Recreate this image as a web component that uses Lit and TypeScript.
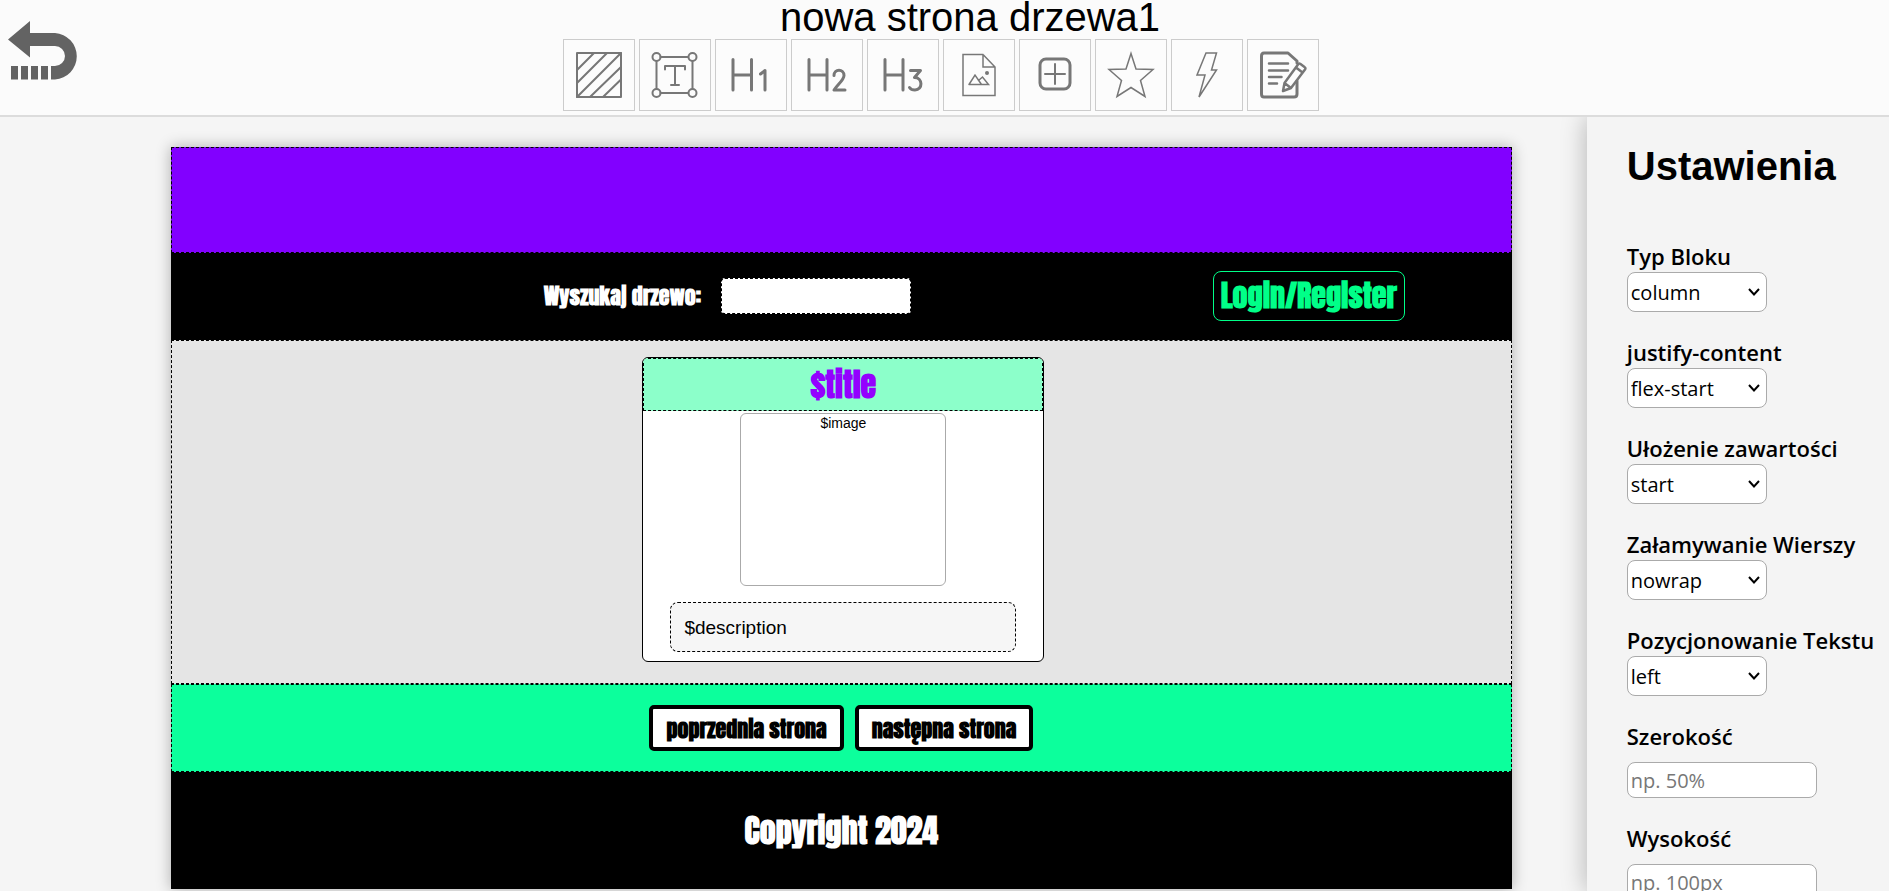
import { LitElement, html, css, svg } from "lit";
import { customElement, property } from "lit/decorators.js";

const icons: Record<string, unknown> = {
  block: svg`<rect x="14" y="14" width="44" height="44"/>
    <path d="M14 31 31 14M14 44 44 14M14 58 58 14M27 58 58 28M40 58 58 40.500"/>`,
  text: svg`<path d="M21.500 18H49M53.500 22V49.500M49 54H21.500M17.500 49.500V22"/>
    <circle cx="17.500" cy="18" r="4"/><circle cx="53.500" cy="18" r="4"/><circle cx="17.500" cy="54" r="4"/><circle cx="53.500" cy="54" r="4"/>
    <path d="M26 30.500V27H46V30.500M36 27V45.500M32 46H40"/>`,
  h1: svg`<path class="heavy" d="M18 20.500V51M36.500 20.500V51M18 36H36.500M45.500 35 50 31.500V51"/>`,
  h2: svg`<path class="heavy" d="M18 20.500V51M36 20.500V51M18 36H36M43 36.500C43 29.500 53 29.500 53 36.500C53 41 47 45 43 51H54"/>`,
  h3: svg`<path class="heavy" d="M18 20.500V51M36 20.500V51M18 36H36M43.500 31.500H53.500L47.500 38.500C56 38.500 56 51 48 51C45.500 51 43.500 50 42.500 48.500"/>`,
  image: svg`<path class="thin" d="M20 15.500H40L52 28V56.500H20ZM40 15.500V28H52M26 45.500 32 36 38.500 45.500M35.500 41.500 39.500 38 45.500 45.500H26"/>
    <circle class="dot" cx="44" cy="34" r="2"/>`,
  plus: svg`<rect class="heavy" x="21" y="20" width="30" height="30" rx="6"/><path d="M36 25V45M26 35H46"/>`,
  star: svg`<path class="thin" d="M36 14.500 41 30 58 30.500 45.500 41.500 50 57.500 36 48.500 22 57.500 26.500 41.500 14 30.500 31 30Z"/>`,
  bolt: svg`<path class="thin" d="M35 14H45.500L40.500 31H45.500L28 58 34 36H26Z"/>`,
  note: svg`<path class="heavy" d="M50 24V22L41 14H17Q14.500 14 14.500 17V55Q14.500 58 17 58H47Q50 58 50 55V42"/>
    <path class="medium" d="M22 24.500H41M22 31.500H41M22 38H34.500M22 44.500H30"/>
    <path class="medium" d="M37.500 44 51 25.500Q52 24 53.500 25L57.500 28Q59 29 58 30.500L44 49 36 52ZM37.500 44 44 49M49 28.500 55.500 33.500"/>`,
};

@customElement("settings-field")
class SettingsField extends LitElement {
  @property() label = "";
  @property() value = "";
  @property() hint = "";

  static styles = css`
    :host { display: block; }
    .name { display: block; font-size: 22px; font-weight: 600; line-height: 32px; white-space: nowrap; }
    .pick { display: grid; width: 140px; align-items: center; }
    .pick > * { grid-area: 1 / 1; }
    .chevron { justify-self: end; margin-right: 7px; pointer-events: none; }
    select, input {
      box-sizing: border-box; margin: 0; padding: 0 3px; font: inherit; font-size: 20px; color: #000;
      background: #fff; border: 1px solid #aaa; border-radius: 8px;
    }
    select { appearance: none; width: 100%; height: 40px; }
    input { display: block; width: 190px; height: 36px; margin-top: 10px; }
    input::placeholder { color: #777; }
  `;

  render() {
    return html`<label class="name" for="control">${this.label}</label>
      ${this.hint
        ? html`<input id="control" type="text" placeholder=${this.hint} />`
        : html`<div class="pick">
            <select id="control"><option>${this.value}</option></select>
            <svg class="chevron" width="12" height="8" viewBox="0 0 12 8" fill="none" stroke="#000" stroke-width="2"><path d="M1 1 6 6.500 11 1"/></svg>
          </div>`}`;
  }
}

@customElement("app-root")
class AppRoot extends LitElement {
  static styles = css`
    :host {
      display: flex; flex-direction: column; height: 100vh; overflow: hidden;
      font-family: "Liberation Sans", Arial, sans-serif; color: #000; background: #f5f5f5;
    }
    button { font: inherit; cursor: pointer; }
    .header {
      display: grid; grid-template-columns: 80px 1fr 87px; align-items: start; flex: none;
      box-sizing: border-box; padding-bottom: 4px; background: #fbfbfb; border-bottom: 2px solid #dcdcdc;
    }
    .back { margin: 20px 0 0 8px; padding: 0; border: 0; background: none; line-height: 0; justify-self: start; }
    .middle { display: flex; flex-direction: column; align-items: center; }
    .page-name { margin: 0; padding-left: 58px; font-size: 40px; font-weight: 400; line-height: 34px; }
    .tools { display: flex; gap: 4px; margin-top: 5px; }
    .tool { box-sizing: border-box; width: 72px; height: 72px; padding: 0; border: 1px solid #ccc; background: #fcfcfc; }
    .tool svg { display: block; margin: -1px; fill: none; stroke: #777; stroke-width: 2; stroke-linecap: round; stroke-linejoin: round; }
    .tool .heavy { stroke-width: 3; }
    .tool .medium { stroke-width: 2.500; }
    .tool .thin { stroke-width: 1.500; stroke-linejoin: miter; }
    .tool .dot { fill: #777; stroke: none; }

    .body { display: flex; flex: 1; min-height: 0; }
    .stage { flex: 1; min-width: 0; overflow: hidden; padding: 30px 75px 0 171px; }
    .canvas {
      box-shadow: 0 0 14px rgba(0, 0, 0, 0.3); font-weight: 700;
      font-family: Impact, Anton, "Open Sans Condensed", "Roboto Condensed", "Liberation Sans Narrow", "Liberation Sans", sans-serif;
    }
    .row { box-sizing: border-box; border: 1px dashed #000; }
    .banner { height: 106px; background: #8200ff; }
    .search { display: grid; grid-template-columns: 1fr 192px 106px; align-items: center; height: 87px; padding-bottom: 2px; background: #000; color: #fff; border-color: #000; }
    .find { display: flex; align-items: center; justify-content: center; gap: 20px; padding-left: 70px; }
    .find-label { font-size: 22px; }
    .find-box { box-sizing: border-box; width: 190px; height: 36px; border: 1px dashed #000; border-radius: 4px; background: #fff; font-size: 20px; }
    .login { box-sizing: border-box; height: 50px; padding: 0; border: 1px solid #00ff88; border-radius: 8px; background: #000; color: #00ff88; font-size: 30px; }
    .content { display: flex; justify-content: center; padding: 16px 0 21px 4px; background: #e5e5e5; }
    .card { box-sizing: border-box; width: 402px; border: 1px solid #000; border-radius: 6px; background: #fff; overflow: hidden; padding-bottom: 9px; }
    .title { margin: 0; box-sizing: border-box; height: 53px; border: 1px dashed #000; background: #8cffca; color: #9400ff; text-align: center; font-size: 32px; line-height: 51px; }
    .picture, .description { box-sizing: border-box; font-family: "Liberation Sans", Arial, sans-serif; font-weight: 400; }
    .picture { width: 206px; height: 173px; margin: 2px auto 16px; border: 1px solid #aaa; border-radius: 6px; text-align: center; font-size: 14px; line-height: 18px; }
    .description { width: 346px; height: 50px; margin: 0 auto; padding-left: 13px; border: 1px dashed #000; border-radius: 8px; background: #f6f6f6; font-size: 19px; line-height: 50px; }
    .pager { display: flex; justify-content: center; align-items: center; gap: 11px; height: 88px; background: #0cff9c; }
    .pager-button { box-sizing: border-box; height: 46px; padding: 0 13px; border: 4px solid #000; border-radius: 5px; background: #fff; color: #000; font-size: 22px; }
    .footer { height: 117px; background: #000; color: #fff; text-align: center; font-size: 32px; line-height: 117px; }

    .settings {
      box-sizing: border-box; flex: 0 0 16%; padding: 26px 0 0 40px; overflow: hidden;
      background: #f4f4f4; box-shadow: 0 0 24px rgba(0, 0, 0, 0.28); clip-path: inset(0 0 0 -40px);
    }
    .settings-title { margin: 0 0 51px; font-size: 40px; line-height: 46px; }
    .fields { display: flex; flex-direction: column; gap: 24px; font-family: "Segoe UI", "Open Sans", "Noto Sans", sans-serif; }
  `;

  private tools: [string, string][] = [
    ["block", "Blok"], ["text", "Tekst"], ["h1", "Nagłówek 1"], ["h2", "Nagłówek 2"], ["h3", "Nagłówek 3"],
    ["image", "Obraz"], ["plus", "Przycisk"], ["star", "Ikona"], ["bolt", "Akcja"], ["note", "Formularz"],
  ];

  private fields = [
    { label: "Typ Bloku", value: "column" },
    { label: "justify-content", value: "flex-start" },
    { label: "Ułożenie zawartości", value: "start" },
    { label: "Załamywanie Wierszy", value: "nowrap" },
    { label: "Pozycjonowanie Tekstu", value: "left" },
    { label: "Szerokość", hint: "np. 50%" },
    { label: "Wysokość", hint: "np. 100px" },
  ];

  render() {
    return html`
      <header class="header">
        <button class="back" aria-label="Wstecz">
          <svg width="71" height="60" viewBox="0 0 71 60" fill="#636363">
            <path d="M0 19.500 22 1V13H47A23.300 23.300 0 0 1 47 59.500H43V46H47A10 10 0 0 0 47 26H22V37.500Z"/>
            <path d="M3 46h7v13.500h-7zM13 46h7v13.500h-7zM23 46h7v13.500h-7zM33 46h7v13.500h-7z"/>
          </svg>
        </button>
        <div class="middle">
          <h1 class="page-name">nowa strona drzewa1</h1>
          <div class="tools">
            ${this.tools.map(([id, name]) => html`<button class="tool" aria-label=${name}><svg width="72" height="72" viewBox="0 0 72 72">${icons[id]}</svg></button>`)}
          </div>
        </div>
      </header>
      <div class="body">
        <main class="stage">
          <div class="canvas">
            <div class="row banner"></div>
            <div class="row search">
              <div class="find">
                <label class="find-label" for="find">Wyszukaj drzewo:</label>
                <input class="find-box" id="find" type="text" />
              </div>
              <button class="login">Login/Register</button>
            </div>
            <div class="row content">
              <article class="card">
                <h2 class="title">$title</h2>
                <div class="picture">$image</div>
                <div class="description">$description</div>
              </article>
            </div>
            <div class="row pager">
              <button class="pager-button">poprzednia strona</button>
              <button class="pager-button">następna strona</button>
            </div>
            <div class="footer">Copyright 2024</div>
          </div>
        </main>
        <aside class="settings">
          <h2 class="settings-title">Ustawienia</h2>
          <div class="fields">
            ${this.fields.map((f) => html`<settings-field .label=${f.label} .value=${f.value ?? ""} .hint=${f.hint ?? ""}></settings-field>`)}
          </div>
        </aside>
      </div>
    `;
  }
}
